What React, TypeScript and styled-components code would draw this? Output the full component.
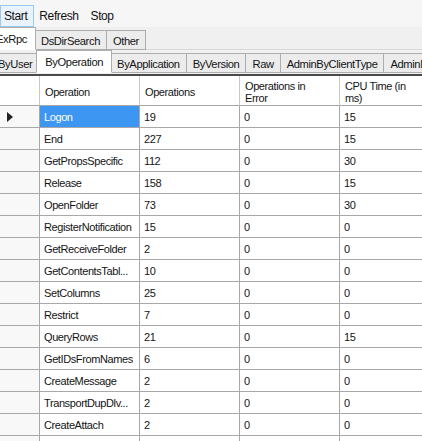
import React from 'react';
import styled, { createGlobalStyle } from 'styled-components';

const GlobalStyle = createGlobalStyle`
  html, body {
    margin: 0;
    padding: 0;
    background: #f0f0f0;
    overflow: hidden;
  }
  body {
    font-family: 'Liberation Sans', Arial, sans-serif;
    font-size: 11px;
    letter-spacing: -0.4px;
    color: #141414;
  }
`;

const Window = styled.div`
  width: 422px;
  height: 441px;
  overflow: hidden;
  background: #f0f0f0;
  display: flex;
  flex-direction: column;
`;

const MenuBar = styled.div`
  height: 29px;
  display: flex;
  align-items: flex-start;
  padding: 5px 0 0 0;
  box-sizing: border-box;
  background: #f6f6f6;
  font-size: 12px;
`;

const MenuItem = styled.div<{ $active?: boolean }>`
  height: 22px;
  display: flex;
  align-items: center;
  padding: 0 6px 0 3px;
  margin-right: 1px;
  box-sizing: border-box;
  border: 1px solid ${(p) => (p.$active ? '#99c9ef' : 'transparent')};
  background: ${(p) => (p.$active ? '#eaf3fb' : 'transparent')};
  color: #111;
`;

const TabStrip = styled.div<{ $shift: number }>`
  height: 22px;
  display: flex;
  align-items: flex-end;
  margin-left: ${(p) => p.$shift}px;
  white-space: nowrap;
  border-bottom: 1px solid #d9d9d9;
`;

const Tab = styled.div<{ $active?: boolean }>`
  height: ${(p) => (p.$active ? 23 : 20)}px;
  margin: 0 ${(p) => (p.$active ? -2 : -1)}px -1px ${(p) => (p.$active ? -2 : 0)}px;
  position: relative;
  z-index: ${(p) => (p.$active ? 1 : 0)};
  display: flex;
  align-items: center;
  padding: ${(p) => (p.$active ? '1px 8px 0' : '1px 6px 0')};
  box-sizing: border-box;
  border: 1px solid #adadad;
  border-bottom-color: ${(p) => (p.$active ? '#fff' : '#adadad')};
  background: ${(p) => (p.$active ? '#ffffff' : '#ececec')};
  font-size: 11.2px;
  flex-shrink: 0;
`;

const Grid = styled.div`
  display: grid;
  grid-template-columns: 40px 100px 100px 100px 100px;
  grid-template-rows: 30px;
  grid-auto-rows: 22px;
  margin-top: 1px;
  border-top: 2px solid #4a4a4a;
  background: #ffffff;
  flex: 1;
  align-content: start;
`;

const HeadCell = styled.div`
  display: flex;
  align-items: center;
  padding: 3px 16px 0 5px;
  box-sizing: border-box;
  border-right: 1px solid #c8c8c8;
  border-bottom: 1px solid #a8a8a8;
  background: #ffffff;
  line-height: 12px;
`;

const Cell = styled.div<{ $selected?: boolean }>`
  display: flex;
  align-items: center;
  padding: 0 3px 0 4px;
  box-sizing: border-box;
  border-right: 1px solid #a8a8a8;
  border-bottom: 1px solid #a8a8a8;
  background: ${(p) => (p.$selected ? '#3d97f2' : '#ffffff')};
  color: ${(p) => (p.$selected ? '#ffffff' : '#141414')};
  white-space: nowrap;
  overflow: hidden;
`;

const RowHead = styled(Cell)`
  background: #f8f8f8;
  padding-left: 7px;
`;

const Arrow = styled.svg`
  width: 6px;
  height: 10px;
`;

const rows: [string, string, string, string][] = [
  ['Logon', '19', '0', '15'],
  ['End', '227', '0', '15'],
  ['GetPropsSpecific', '112', '0', '30'],
  ['Release', '158', '0', '15'],
  ['OpenFolder', '73', '0', '30'],
  ['RegisterNotification', '15', '0', '0'],
  ['GetReceiveFolder', '2', '0', '0'],
  ['GetContentsTabl...', '10', '0', '0'],
  ['SetColumns', '25', '0', '0'],
  ['Restrict', '7', '0', '0'],
  ['QueryRows', '21', '0', '15'],
  ['GetIDsFromNames', '6', '0', '0'],
  ['CreateMessage', '2', '0', '0'],
  ['TransportDupDlv...', '2', '0', '0'],
  ['CreateAttach', '2', '0', '0'],
  ['', '', '', ''],
];

export default function App() {
  return (
    <Window>
      <GlobalStyle />
      <MenuBar>
        <MenuItem $active>Start</MenuItem>
        <MenuItem>Refresh</MenuItem>
        <MenuItem>Stop</MenuItem>
      </MenuBar>
      <TabStrip $shift={-11}>
        <Tab $active>ExRpc</Tab>
        <Tab>DsDirSearch</Tab>
        <Tab>Other</Tab>
      </TabStrip>
      <TabStrip $shift={-9}>
        <Tab>ByUser</Tab>
        <Tab $active>ByOperation</Tab>
        <Tab>ByApplication</Tab>
        <Tab>ByVersion</Tab>
        <Tab>Raw</Tab>
        <Tab>AdminByClientType</Tab>
        <Tab>AdminByClientVersion</Tab>
      </TabStrip>
      <Grid>
        <HeadCell />
        <HeadCell>Operation</HeadCell>
        <HeadCell>Operations</HeadCell>
        <HeadCell>Operations in Error</HeadCell>
        <HeadCell>CPU Time (in ms)</HeadCell>
        {rows.map((r, i) => (
          <React.Fragment key={i}>
            <RowHead>
              {i === 0 && (
                <Arrow viewBox="0 0 6 10">
                  <path d="M0 0 L6 5 L0 10 Z" fill="#222" />
                </Arrow>
              )}
            </RowHead>
            <Cell $selected={i === 0}>{r[0]}</Cell>
            <Cell>{r[1]}</Cell>
            <Cell>{r[2]}</Cell>
            <Cell>{r[3]}</Cell>
          </React.Fragment>
        ))}
      </Grid>
    </Window>
  );
}
